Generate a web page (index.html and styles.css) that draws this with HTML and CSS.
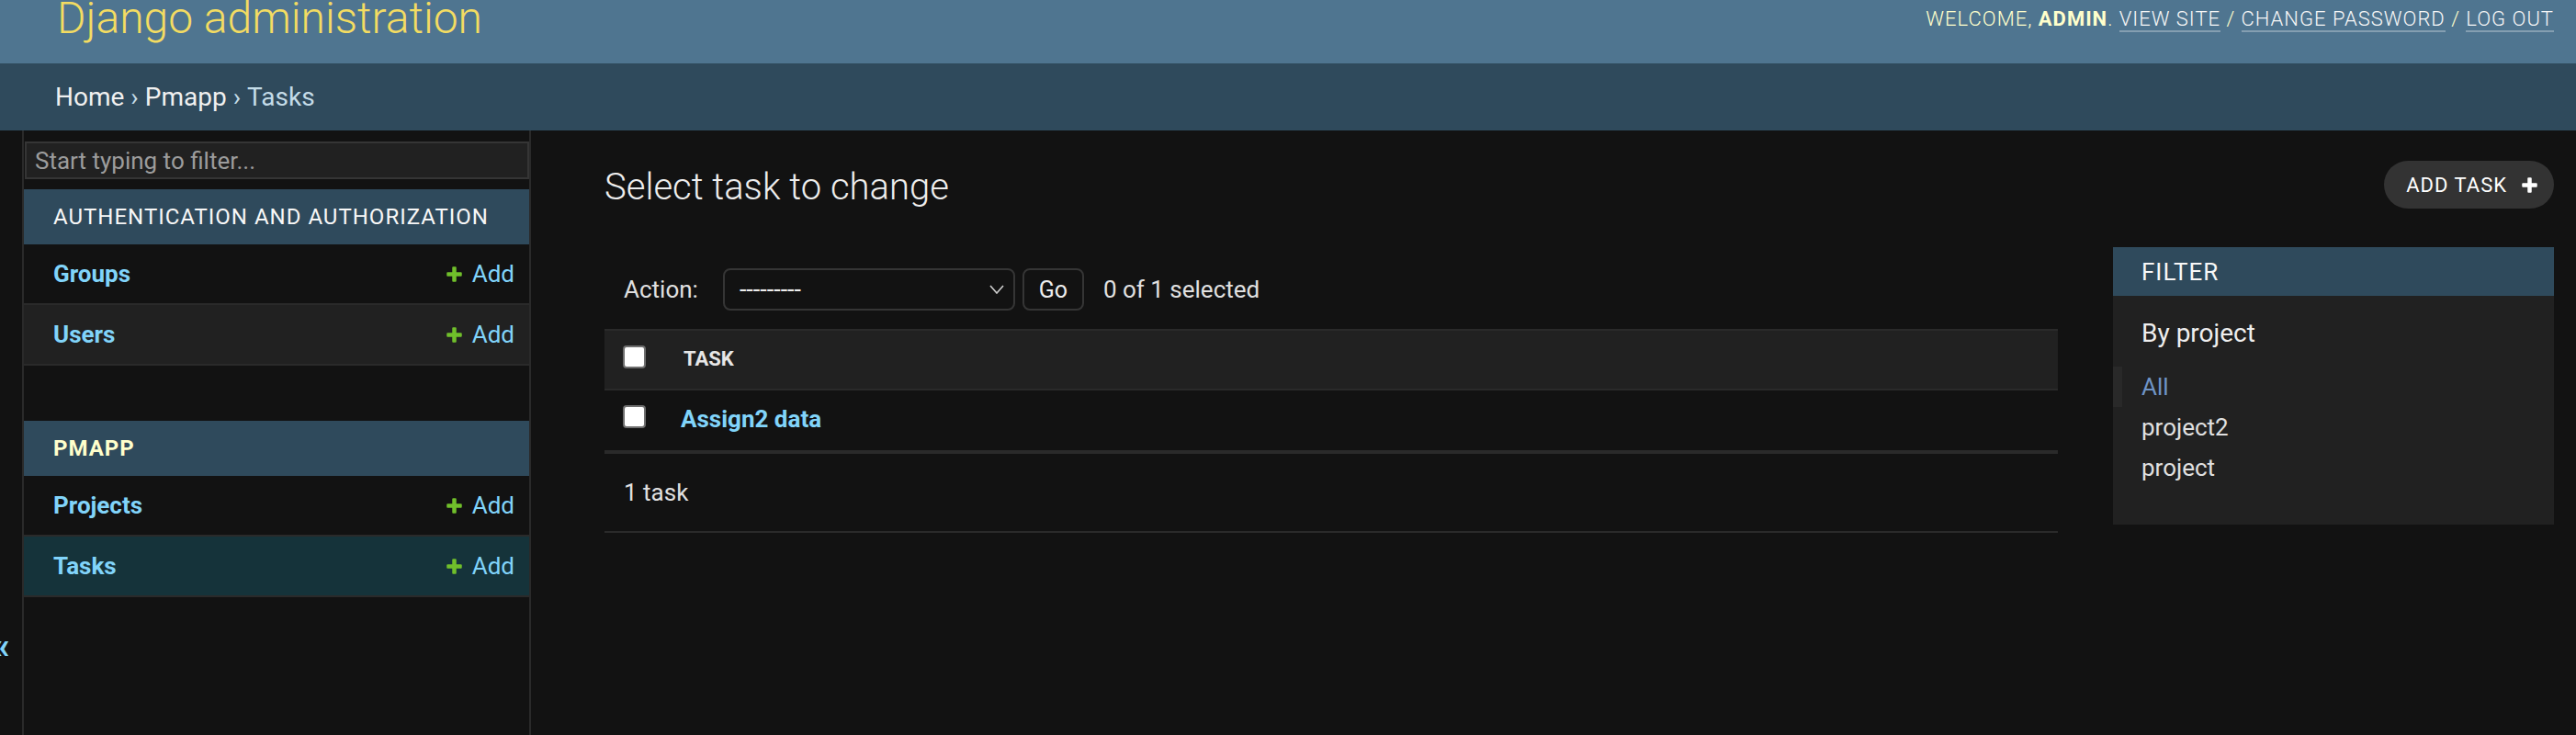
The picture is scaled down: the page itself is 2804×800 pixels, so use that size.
FILE: index.html
```html
<!DOCTYPE html>
<html lang="en">
<head>
<meta charset="utf-8">
<title>Select task to change | Django site admin</title>
<link rel="stylesheet" href="styles.css">
</head>
<body>
<header class="site-header">
  <div class="branding">Django administration</div>
  <div class="user-tools">Welcome, <strong>admin</strong>. <a href="#">View site</a> / <a href="#">Change password</a> / <a href="#">Log out</a></div>
</header>
<nav class="breadcrumbs"><a href="#">Home</a><span class="sep">›</span><a href="#">Pmapp</a><span class="sep">›</span><span class="current">Tasks</span></nav>
<div class="main">
  <button class="toggle-nav" type="button"><span>«</span></button>
  <aside class="sidebar">
    <input class="nav-filter" type="search" placeholder="Start typing to filter...">
    <div class="app-module">
      <div class="caption">Authentication and Authorization</div>
      <div class="model-row"><a class="model-link" href="#">Groups</a><a class="addlink" href="#"><svg class="plus" viewBox="0 0 1792 1792"><path d="M1600 796v192q0 40-28 68t-68 28h-416v416q0 40-28 68t-68 28h-192q-40 0-68-28t-28-68v-416h-416q-40 0-68-28t-28-68v-192q0-40 28-68t68-28h416v-416q0-40 28-68t68-28h192q40 0 68 28t28 68v416h416q40 0 68 28t28 68z"/></svg>Add</a></div>
      <div class="model-row hovered"><a class="model-link" href="#">Users</a><a class="addlink" href="#"><svg class="plus" viewBox="0 0 1792 1792"><path d="M1600 796v192q0 40-28 68t-68 28h-416v416q0 40-28 68t-68 28h-192q-40 0-68-28t-28-68v-416h-416q-40 0-68-28t-28-68v-192q0-40 28-68t68-28h416v-416q0-40 28-68t68-28h192q40 0 68 28t28 68v416h416q40 0 68 28t28 68z"/></svg>Add</a></div>
    </div>
    <div class="app-module">
      <div class="caption current-app">Pmapp</div>
      <div class="model-row"><a class="model-link" href="#">Projects</a><a class="addlink" href="#"><svg class="plus" viewBox="0 0 1792 1792"><path d="M1600 796v192q0 40-28 68t-68 28h-416v416q0 40-28 68t-68 28h-192q-40 0-68-28t-28-68v-416h-416q-40 0-68-28t-28-68v-192q0-40 28-68t68-28h416v-416q0-40 28-68t68-28h192q40 0 68 28t28 68v416h416q40 0 68 28t28 68z"/></svg>Add</a></div>
      <div class="model-row current-model"><a class="model-link" href="#">Tasks</a><a class="addlink" href="#"><svg class="plus" viewBox="0 0 1792 1792"><path d="M1600 796v192q0 40-28 68t-68 28h-416v416q0 40-28 68t-68 28h-192q-40 0-68-28t-28-68v-416h-416q-40 0-68-28t-28-68v-192q0-40 28-68t68-28h416v-416q0-40 28-68t68-28h192q40 0 68 28t28 68v416h416q40 0 68 28t28 68z"/></svg>Add</a></div>
    </div>
  </aside>
  <main class="content">
    <div class="content-head">
      <h1>Select task to change</h1>
      <a class="add-btn" href="#">Add task <svg class="plus-white" viewBox="0 0 1792 1792"><path d="M1600 796v192q0 40-28 68t-68 28h-416v416q0 40-28 68t-68 28h-192q-40 0-68-28t-28-68v-416h-416q-40 0-68-28t-28-68v-192q0-40 28-68t68-28h416v-416q0-40 28-68t68-28h192q40 0 68 28t28 68v416h416q40 0 68 28t28 68z"/></svg></a>
    </div>
    <div class="changelist">
      <div class="changelist-form">
        <div class="actions">
          <span class="action-label">Action:</span>
          <div class="select"><span>---------</span><svg class="chevron" viewBox="0 0 16 10"><polyline points="1,1 8,9 15,1"/></svg></div>
          <button class="go" type="button">Go</button>
          <span class="counter">0 of 1 selected</span>
        </div>
        <div class="th-row">
          <input class="check" type="checkbox">
          <span class="col-title">Task</span>
        </div>
        <div class="tr-row">
          <input class="check" type="checkbox">
          <a class="row-link" href="#">Assign2 data</a>
        </div>
        <p class="paginator">1 task</p>
      </div>
      <div class="filter">
        <h2>Filter</h2>
        <h3>By project</h3>
        <ul>
          <li class="selected"><a href="#">All</a></li>
          <li><a href="#">project2</a></li>
          <li><a href="#">project</a></li>
        </ul>
      </div>
    </div>
  </main>
</div>
</body>
</html>
```
FILE: styles.css
```css
* { box-sizing: border-box; }
html, body { margin: 0; padding: 0; }
body {
  width: 2804px;
  height: 800px;
  overflow: hidden;
  background: #121212;
  color: #eeeeee;
  font-family: Roboto, "Liberation Sans", sans-serif;
}
a { text-decoration: none; }

/* header */
.site-header {
  height: 69px;
  background: #4f7590;
  display: flex;
  justify-content: space-between;
  align-items: flex-start;
  padding: 0 24px 0 62px;
  overflow: hidden;
}
.branding {
  font-size: 48px;
  font-weight: 300;
  line-height: 48px;
  color: #f3dc62;
  margin-top: -4px;
}
.user-tools {
  margin-top: 10px;
  font-size: 22px;
  line-height: 22px;
  font-weight: 300;
  letter-spacing: 1px;
  text-transform: uppercase;
  color: #ffffcc;
}
.user-tools strong { font-weight: 700; }
.user-tools a {
  color: #f7f7f7;
  border-bottom: 2px solid rgba(255, 255, 255, 0.3);
}

/* breadcrumbs */
.breadcrumbs {
  height: 73px;
  background: #2f4a5c;
  display: flex;
  align-items: center;
  padding-left: 60px;
  font-size: 28px;
  color: #c4dce8;
}
.breadcrumbs a { color: #f0f0f0; }
.breadcrumbs .sep { margin: 0 7px; }

/* main layout */
.main { display: flex; height: 658px; }
.toggle-nav {
  width: 26px;
  flex: none;
  border: 0;
  border-right: 2px solid #2a2a2a;
  background: #121212;
  padding: 542px 0 0 0;
  display: flex;
  align-items: flex-start;
  justify-content: flex-start;
  overflow: hidden;
  font-family: Roboto, sans-serif;
  font-size: 40px;
  line-height: 40px;
  font-weight: 700;
  color: #81d4fa;
}
.toggle-nav span { margin-left: -9px; }

.sidebar {
  width: 552px;
  flex: none;
  border-right: 2px solid #2a2a2a;
  padding-top: 12px;
}
.nav-filter {
  display: block;
  width: 549px;
  height: 41px;
  margin: 0 0 11px 1px;
  padding: 0 9px;
  border: 2px solid #353535;
  background: #212121;
  color: #eeeeee;
  font-family: Roboto, sans-serif;
  font-size: 26px;
  outline: none;
}
.nav-filter::placeholder { color: #9c9c9c; }
.app-module { margin-bottom: 60px; }
.caption {
  height: 60px;
  display: flex;
  align-items: center;
  padding-left: 32px;
  background: #2f4a5c;
  color: #f7f7f7;
  font-size: 24px;
  letter-spacing: 1px;
  text-transform: uppercase;
}
.caption.current-app { color: #ffffcc; font-weight: 700; }
.model-row {
  height: 66px;
  border-bottom: 2px solid #2a2a2a;
  display: flex;
  align-items: center;
  justify-content: space-between;
  padding: 0 16px 0 32px;
}
.model-row.hovered { background: #212121; }
.model-row.current-model { background: #15333a; }
.model-link { color: #81d4fa; font-weight: 700; font-size: 26px; }
.addlink {
  display: flex;
  align-items: center;
  color: #81d4fa;
  font-size: 26px;
}
.plus { width: 21px; height: 21px; margin-right: 9px; fill: #70bf2b; }

/* content */
.content { flex: 1; min-width: 0; padding: 33px 24px 0 80px; }
.content-head {
  display: flex;
  justify-content: space-between;
  align-items: flex-start;
  height: 52px;
  margin-bottom: 42px;
}
h1 {
  margin: 6px 0 0 0;
  font-size: 40px;
  line-height: 46px;
  font-weight: 300;
  color: #eeeeee;
}
.add-btn {
  height: 52px;
  display: flex;
  align-items: center;
  padding: 0 16px 0 24px;
  border-radius: 26px;
  background: #333333;
  color: #ffffff;
  font-size: 22px;
  letter-spacing: 1px;
  text-transform: uppercase;
}
.plus-white { width: 21px; height: 21px; margin-left: 14px; fill: #ffffff; }

.changelist { display: flex; align-items: flex-start; }
.changelist-form { flex: 1; min-width: 0; margin-top: 3px; }
.actions {
  height: 86px;
  display: flex;
  align-items: center;
  padding-left: 21px;
  color: #e0e0e0;
  font-size: 26px;
}
.action-label { margin-right: 27px; }
.select {
  width: 318px;
  height: 46px;
  border: 2px solid #353535;
  border-radius: 8px;
  background: #121212;
  display: flex;
  align-items: center;
  justify-content: space-between;
  padding: 0 10px 0 16px;
  color: #eeeeee;
  font-size: 27px;
}
.chevron { width: 16px; height: 10px; fill: none; stroke: #cfcfcf; stroke-width: 1.6; }
.go {
  margin-left: 8px;
  width: 67px;
  height: 46px;
  border: 2px solid #353535;
  border-radius: 8px;
  background: #121212;
  color: #eeeeee;
  font-family: Roboto, sans-serif;
  font-size: 25px;
  padding: 0;
}
.counter { margin-left: 21px; }

.check {
  appearance: none;
  -webkit-appearance: none;
  width: 25px;
  height: 25px;
  margin: 0;
  flex: none;
  background: #ffffff;
  border: 2px solid #6f6f6f;
  border-radius: 4px;
}
.th-row {
  height: 67px;
  display: flex;
  align-items: flex-start;
  padding: 16px 0 0 20px;
  background: #212121;
  border-top: 2px solid #2a2a2a;
  border-bottom: 2px solid #2a2a2a;
}
.col-title {
  margin: 2px 0 0 41px;
  font-size: 22px;
  line-height: 26px;
  font-weight: 700;
  text-transform: uppercase;
  color: #e6e6e6;
}
.tr-row {
  height: 67px;
  display: flex;
  align-items: flex-start;
  padding: 16px 0 0 20px;
  border-bottom: 2px solid #2a2a2a;
}
.row-link {
  margin-left: 38px;
  font-size: 26px;
  line-height: 30px;
  font-weight: 700;
  color: #81d4fa;
}
.paginator {
  margin: 0;
  height: 88px;
  display: flex;
  align-items: center;
  padding-left: 21px;
  border-top: 2px solid #2a2a2a;
  border-bottom: 2px solid #2a2a2a;
  font-size: 26px;
  color: #e0e0e0;
}

.filter {
  flex: none;
  width: 480px;
  margin-left: 60px;
  background: #212121;
  padding-bottom: 40px;
}
.filter h2 {
  margin: 0;
  height: 53px;
  display: flex;
  align-items: center;
  padding-left: 31px;
  background: #2f4a5c;
  color: #f7f7f7;
  font-size: 26px;
  font-weight: 400;
  letter-spacing: 1px;
  text-transform: uppercase;
}
.filter h3 {
  margin: 24px 0 19px 0;
  padding-left: 31px;
  font-size: 28px;
  line-height: 34px;
  font-weight: 400;
  color: #eeeeee;
}
.filter ul { list-style: none; margin: 0; padding: 0; }
.filter li {
  height: 44px;
  line-height: 44px;
  padding-left: 31px;
  font-size: 26px;
}
.filter li a { color: #e0e0e0; }
.filter li.selected { border-left: 10px solid #292929; padding-left: 21px; }
.filter li.selected a { color: #6f94c6; }
```
